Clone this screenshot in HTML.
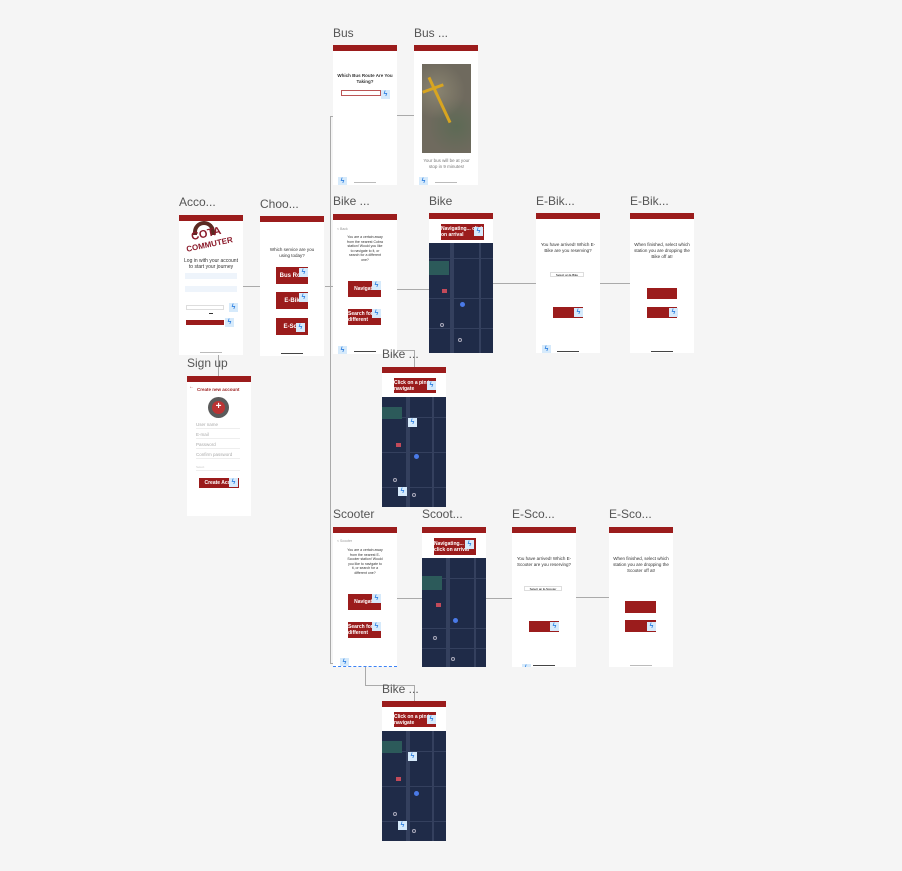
<!DOCTYPE html>
<html><head><meta charset="utf-8"><style>
*{margin:0;padding:0;box-sizing:border-box}
body{width:902px;height:871px;background:#f5f5f5;position:relative;overflow:hidden;font-family:"Liberation Sans",sans-serif}
.l{position:absolute;font-size:12px;color:#555;white-space:nowrap}
.f{position:absolute;width:64px;height:140px;background:#fff;overflow:hidden}
.h{position:absolute;left:0;top:0;width:100%;height:6px;background:#9b1c1c}
.a{position:absolute}
.rb{position:absolute;background:#9b1c1c;color:#fff;font-size:5px;font-weight:bold;display:flex;align-items:center;justify-content:center;overflow:hidden}
.bz{position:absolute;width:9px;height:9px;background:#d6eafb;color:#2f80e0;font-size:7px;line-height:9px;text-align:center;font-weight:bold}
.t{position:absolute;font-size:4.5px;color:#333;text-align:center;line-height:6px}
.hb{position:absolute;height:1px;background:#444;width:22px}
.ln{position:absolute;background:#aaa}
.map{position:absolute;background:#1f2b48;overflow:hidden}
.map i{position:absolute;background:#34405e}
.pin{position:absolute;width:4px;height:4px;border-radius:50%;border:1px solid #aab}
</style></head><body>

<!-- connectors -->
<div class="ln" style="left:330px;top:116px;width:1px;height:548px"></div>
<div class="ln" style="left:330px;top:116px;width:3px;height:1px"></div>
<div class="ln" style="left:397px;top:115px;width:17px;height:1px"></div>
<div class="ln" style="left:243px;top:286px;width:17px;height:1px"></div>
<div class="ln" style="left:325px;top:286px;width:8px;height:1px"></div>
<div class="ln" style="left:397px;top:289px;width:32px;height:1px"></div>
<div class="ln" style="left:493px;top:283px;width:43px;height:1px"></div>
<div class="ln" style="left:600px;top:283px;width:30px;height:1px"></div>
<div class="ln" style="left:366px;top:322px;width:1px;height:28px"></div>
<div class="ln" style="left:366px;top:350px;width:48px;height:1px"></div>
<div class="ln" style="left:414px;top:350px;width:1px;height:17px"></div>
<div class="ln" style="left:218px;top:355px;width:1px;height:21px"></div>
<div class="ln" style="left:330px;top:663px;width:3px;height:1px"></div>
<div class="ln" style="left:397px;top:598px;width:25px;height:1px"></div>
<div class="ln" style="left:486px;top:598px;width:26px;height:1px"></div>
<div class="ln" style="left:576px;top:597px;width:33px;height:1px"></div>
<div class="ln" style="left:365px;top:667px;width:1px;height:18px"></div>
<div class="ln" style="left:365px;top:685px;width:49px;height:1px"></div>
<div class="ln" style="left:414px;top:685px;width:1px;height:16px"></div>

<!-- Account -->
<div class="l" style="left:179px;top:195px">Acco...</div>
<div class="f" style="left:179px;top:215px">
 <div class="h"></div>
 <div class="a" style="left:14px;top:6px;width:22px;height:14px;border:4px solid #5b2a22;border-bottom:none;border-radius:12px 12px 0 0"></div>
 <div class="a" style="left:12px;top:13px;font-size:11px;font-weight:bold;color:#8b1a2a;transform:rotate(-12deg)">COTA</div>
 <div class="a" style="left:7px;top:25px;font-size:8px;font-weight:bold;color:#8b1a2a;transform:rotate(-12deg)">COMMUTER</div>
 <div class="t" style="left:4px;top:43px;width:56px;font-size:5px">Log in with your account to start your journey</div>
 <div class="a" style="left:6px;top:58px;width:52px;height:6px;background:#eef4fb"></div>
 <div class="a" style="left:6px;top:71px;width:52px;height:6px;background:#eef4fb"></div>
 <div class="a" style="left:7px;top:90px;width:38px;height:5px;border:1px solid #ddd"></div>
 <div class="bz" style="left:50px;top:88px">ϟ</div>
 <div class="a" style="left:30px;top:98px;width:4px;height:1px;background:#333"></div>
 <div class="rb" style="left:7px;top:105px;width:38px;height:5px"></div>
 <div class="bz" style="left:46px;top:103px">ϟ</div>
 <div class="hb" style="left:21px;top:137px;background:#bbb"></div>
</div>

<!-- Choose -->
<div class="l" style="left:260px;top:197px">Choo...</div>
<div class="f" style="left:260px;top:216px">
 <div class="h"></div>
 <div class="t" style="left:6px;top:31px;width:52px">Which service are you using today?</div>
 <div class="rb" style="left:16px;top:51px;width:32px;height:17px;font-size:6px">Bus Rou</div><div class="bz" style="left:39px;top:52px">ϟ</div>
 <div class="rb" style="left:16px;top:76px;width:32px;height:17px;font-size:6px">E-Bik</div><div class="bz" style="left:39px;top:77px">ϟ</div>
 <div class="rb" style="left:16px;top:102px;width:32px;height:17px;font-size:6px">E-Sco</div><div class="bz" style="left:36px;top:107px">ϟ</div>
 <div class="hb" style="left:21px;top:137px"></div>
</div>

<!-- Bus -->
<div class="l" style="left:333px;top:26px">Bus</div>
<div class="f" style="left:333px;top:45px">
 <div class="h"></div>
 <div class="t" style="left:4px;top:28px;width:56px;font-weight:bold">Which Bus Route Are You Taking?</div>
 <div class="a" style="left:8px;top:45px;width:40px;height:6px;border:1px solid #b55"></div>
 <div class="bz" style="left:48px;top:45px">ϟ</div>
 <div class="bz" style="left:5px;top:132px">ϟ</div>
 <div class="a" style="left:21px;top:137px;width:22px;height:1px;background:#bbb"></div>
</div>

<!-- Bus ... -->
<div class="l" style="left:414px;top:26px">Bus ...</div>
<div class="f" style="left:414px;top:45px">
 <div class="h"></div>
 <div class="a" style="left:8px;top:19px;width:49px;height:89px;background:#6f6a5e;background-image:radial-gradient(circle at 30% 30%,#8a8470 0,transparent 40%),radial-gradient(circle at 70% 70%,#5d6a55 0,transparent 40%)"></div>
 <div class="a" style="left:24px;top:30px;width:3px;height:50px;background:#d8a520;transform:rotate(-25deg)"></div>
 <div class="a" style="left:8px;top:42px;width:22px;height:3px;background:#d8a520;transform:rotate(-20deg)"></div>
 <div class="t" style="left:8px;top:113px;width:49px;color:#777">Your bus will be at your stop in 9 minutes!</div>
 <div class="bz" style="left:5px;top:132px">ϟ</div>
 <div class="a" style="left:21px;top:137px;width:22px;height:1px;background:#bbb"></div>
</div>

<!-- Bike ... (choice) -->
<div class="l" style="left:333px;top:194px">Bike ...</div>
<div class="f" style="left:333px;top:214px">
 <div class="h"></div>
 <div class="t" style="left:4px;top:12px;font-size:3.5px;color:#999">&lt; Back</div>
 <div class="t" style="left:14px;top:21px;width:36px;font-size:3.5px;line-height:4.5px">You are a certain away from the nearest Cobra station! Would you like to navigate to it, or search for a different one?</div>
 <div class="rb" style="left:15px;top:67px;width:33px;height:16px">Navigate</div><div class="bz" style="left:39px;top:67px">ϟ</div>
 <div class="rb" style="left:15px;top:95px;width:33px;height:16px">Search for a different</div><div class="bz" style="left:39px;top:95px">ϟ</div>
 <div class="bz" style="left:5px;top:132px">ϟ</div>
 <div class="hb" style="left:21px;top:137px"></div>
</div>

<!-- Map frame template positions -->
<!-- Bike -->
<div class="l" style="left:429px;top:194px">Bike</div>
<div class="f" style="left:429px;top:213px">
 <div class="h"></div>
 <div class="rb" style="left:12px;top:11px;width:43px;height:16px">Navigating... click on arrival</div><div class="bz" style="left:45px;top:14px">ϟ</div>
 <div class="map" style="left:0;top:30px;width:64px;height:110px">
  <i style="left:21px;top:0;width:4px;height:110px"></i><i style="left:50px;top:0;width:2px;height:110px"></i>
  <i style="left:0;top:15px;width:64px;height:1px"></i><i style="left:0;top:55px;width:64px;height:1px"></i><i style="left:0;top:85px;width:64px;height:1px"></i>
  <i style="left:0;top:18px;width:20px;height:14px;background:#2c5a5a"></i>
  <i style="left:13px;top:46px;width:5px;height:4px;background:#c24a5a"></i>
  <i style="left:31px;top:59px;width:5px;height:5px;background:#4a7ae8;border-radius:50%"></i>
  <div class="pin" style="left:11px;top:80px"></div><div class="pin" style="left:29px;top:95px"></div>
 </div>
</div>

<!-- E-Bik 1 -->
<div class="l" style="left:536px;top:194px">E-Bik...</div>
<div class="f" style="left:536px;top:213px">
 <div class="h"></div>
 <div class="t" style="left:4px;top:29px;width:56px">You have arrived! Which E-Bike are you reserving?</div>
 <div class="a" style="left:14px;top:59px;width:34px;height:5px;border:1px solid #ddd;font-size:3px;text-align:center">Select an E-Bike</div>
 <div class="rb" style="left:17px;top:94px;width:30px;height:11px"></div><div class="bz" style="left:38px;top:95px">ϟ</div>
 <div class="bz" style="left:6px;top:132px">ϟ</div>
 <div class="hb" style="left:21px;top:138px"></div>
</div>

<!-- E-Bik 2 -->
<div class="l" style="left:630px;top:194px">E-Bik...</div>
<div class="f" style="left:630px;top:213px">
 <div class="h"></div>
 <div class="t" style="left:4px;top:29px;width:56px">When finished, select which station you are dropping the Bike off at!</div>
 <div class="rb" style="left:17px;top:75px;width:30px;height:11px"></div>
 <div class="rb" style="left:17px;top:94px;width:30px;height:11px"></div><div class="bz" style="left:39px;top:95px">ϟ</div>
 <div class="hb" style="left:21px;top:138px"></div>
</div>

<!-- Bike ... lower -->
<div class="l" style="left:382px;top:347px">Bike ...</div>
<div class="f" style="left:382px;top:367px">
 <div class="h"></div>
 <div class="rb" style="left:12px;top:11px;width:42px;height:15px">Click on a pin to navigate</div><div class="bz" style="left:45px;top:14px">ϟ</div>
 <div class="map" style="left:0;top:30px;width:64px;height:110px">
  <i style="left:24px;top:0;width:4px;height:110px"></i><i style="left:50px;top:0;width:2px;height:110px"></i>
  <i style="left:0;top:20px;width:64px;height:1px"></i><i style="left:0;top:55px;width:64px;height:1px"></i><i style="left:0;top:90px;width:64px;height:1px"></i>
  <i style="left:0;top:10px;width:20px;height:12px;background:#2c5a5a"></i>
  <i style="left:14px;top:46px;width:5px;height:4px;background:#c24a5a"></i>
  <i style="left:32px;top:57px;width:5px;height:5px;background:#4a7ae8;border-radius:50%"></i>
  <div class="bz" style="left:26px;top:21px">ϟ</div><div class="bz" style="left:16px;top:90px">ϟ</div>
  <div class="pin" style="left:11px;top:81px"></div><div class="pin" style="left:30px;top:96px"></div>
 </div>
</div>

<!-- Sign up -->
<div class="l" style="left:187px;top:356px">Sign up</div>
<div class="f" style="left:187px;top:376px">
 <div class="h"></div>
 <div class="a" style="left:2px;top:8px;font-size:5px;color:#9b1c1c">←</div>
 <div class="a" style="left:10px;top:11px;font-size:4.5px;color:#9b1c1c;font-weight:bold">Create new account</div>
 <div class="a" style="left:21px;top:21px;width:21px;height:21px;border-radius:50%;background:#5a5a5a"></div>
 <div class="a" style="left:25px;top:25px;width:13px;height:13px;border-radius:50%;background:#b33;color:#fff;font-size:10px;line-height:12px;text-align:center;font-weight:bold">+</div>
 <div class="t" style="left:9px;top:46px;width:44px;text-align:left;color:#aaa;border-bottom:1px solid #eee">User name</div>
 <div class="t" style="left:9px;top:56px;width:44px;text-align:left;color:#aaa;border-bottom:1px solid #eee">E-mail</div>
 <div class="t" style="left:9px;top:66px;width:44px;text-align:left;color:#aaa;border-bottom:1px solid #eee">Password</div>
 <div class="t" style="left:9px;top:76px;width:44px;text-align:left;color:#aaa;border-bottom:1px solid #eee">Confirm password</div>
 <div class="t" style="left:9px;top:88px;width:44px;text-align:left;color:#ccc;border-bottom:1px solid #eee;font-size:3px">Select</div>
 <div class="rb" style="left:12px;top:102px;width:40px;height:10px;font-size:5px">Create Acco</div><div class="bz" style="left:42px;top:102px">ϟ</div>
</div>

<!-- Scooter -->
<div class="l" style="left:333px;top:507px">Scooter</div>
<div class="f" style="left:333px;top:527px;border-bottom:1px dashed #3b82f6">
 <div class="h"></div>
 <div class="t" style="left:4px;top:11px;font-size:3.5px;color:#999">&lt; Scooter</div>
 <div class="t" style="left:14px;top:21px;width:36px;font-size:3.5px;line-height:4.5px">You are a certain away from the nearest E-Scooter station! Would you like to navigate to it, or search for a different one?</div>
 <div class="rb" style="left:15px;top:67px;width:33px;height:16px">Navigate</div><div class="bz" style="left:39px;top:67px">ϟ</div>
 <div class="rb" style="left:15px;top:95px;width:33px;height:16px">Search for a different</div><div class="bz" style="left:39px;top:95px">ϟ</div>
 <div class="bz" style="left:7px;top:131px">ϟ</div>
</div>

<!-- Scoot... -->
<div class="l" style="left:422px;top:507px">Scoot...</div>
<div class="f" style="left:422px;top:527px">
 <div class="h"></div>
 <div class="rb" style="left:12px;top:11px;width:42px;height:17px">Navigating... click on arrival</div><div class="bz" style="left:43px;top:13px">ϟ</div>
 <div class="map" style="left:0;top:31px;width:64px;height:109px">
  <i style="left:24px;top:0;width:4px;height:109px"></i><i style="left:52px;top:0;width:2px;height:109px"></i>
  <i style="left:0;top:20px;width:64px;height:1px"></i><i style="left:0;top:70px;width:64px;height:1px"></i><i style="left:0;top:90px;width:64px;height:1px"></i>
  <i style="left:0;top:18px;width:20px;height:14px;background:#2c5a5a"></i>
  <i style="left:14px;top:45px;width:5px;height:4px;background:#c24a5a"></i>
  <i style="left:31px;top:60px;width:5px;height:5px;background:#4a7ae8;border-radius:50%"></i>
  <div class="pin" style="left:11px;top:78px"></div><div class="pin" style="left:29px;top:99px"></div>
 </div>
</div>

<!-- E-Sco 1 -->
<div class="l" style="left:512px;top:507px">E-Sco...</div>
<div class="f" style="left:512px;top:527px">
 <div class="h"></div>
 <div class="t" style="left:4px;top:29px;width:56px">You have arrived! Which E-Scooter are you reserving?</div>
 <div class="a" style="left:12px;top:59px;width:38px;height:5px;border:1px solid #ddd;font-size:3px;text-align:center">Select an E-Scooter</div>
 <div class="rb" style="left:17px;top:94px;width:30px;height:11px"></div><div class="bz" style="left:38px;top:95px">ϟ</div>
 <div class="bz" style="left:10px;top:137px">ϟ</div>
 <div class="hb" style="left:21px;top:138px"></div>
</div>

<!-- E-Sco 2 -->
<div class="l" style="left:609px;top:507px">E-Sco...</div>
<div class="f" style="left:609px;top:527px">
 <div class="h"></div>
 <div class="t" style="left:4px;top:29px;width:56px">When finished, select which station you are dropping the Scooter off at!</div>
 <div class="rb" style="left:16px;top:74px;width:31px;height:12px"></div>
 <div class="rb" style="left:16px;top:93px;width:31px;height:12px"></div><div class="bz" style="left:38px;top:95px">ϟ</div>
 <div class="hb" style="left:21px;top:138px;background:#bbb"></div>
</div>

<!-- Bike ... bottom -->
<div class="l" style="left:382px;top:682px">Bike ...</div>
<div class="f" style="left:382px;top:701px">
 <div class="h"></div>
 <div class="rb" style="left:12px;top:11px;width:42px;height:15px">Click on a pin to navigate</div><div class="bz" style="left:45px;top:14px">ϟ</div>
 <div class="map" style="left:0;top:30px;width:64px;height:110px">
  <i style="left:24px;top:0;width:4px;height:110px"></i><i style="left:50px;top:0;width:2px;height:110px"></i>
  <i style="left:0;top:20px;width:64px;height:1px"></i><i style="left:0;top:55px;width:64px;height:1px"></i><i style="left:0;top:90px;width:64px;height:1px"></i>
  <i style="left:0;top:10px;width:20px;height:12px;background:#2c5a5a"></i>
  <i style="left:14px;top:46px;width:5px;height:4px;background:#c24a5a"></i>
  <i style="left:32px;top:60px;width:5px;height:5px;background:#4a7ae8;border-radius:50%"></i>
  <div class="bz" style="left:26px;top:21px">ϟ</div><div class="bz" style="left:16px;top:90px">ϟ</div>
  <div class="pin" style="left:11px;top:81px"></div><div class="pin" style="left:30px;top:98px"></div>
 </div>
</div>

</body></html>
